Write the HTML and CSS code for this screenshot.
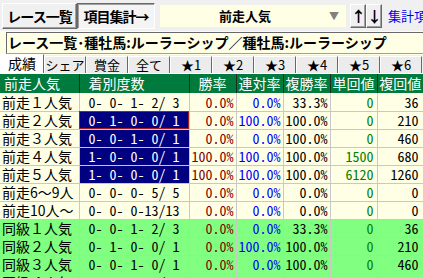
FILE: index.html
```html
<!DOCTYPE html>
<html lang="ja">
  <head>
    <meta charset="utf-8">
    <title>項目集計</title>
    <link rel="stylesheet" href="styles.css">
  </head>
<body>
	<div class="toolbar">
		<button class="btn btn-main">レース一覧</button>
		<button class="btn btn-main btn-down">項目集計→</button>
		<div class="combo">
			<span class="combo-text">前走人気</span>
			<span class="combo-arrow">▼</span>
		</div>
		<button class="btn btn-arrow">↑</button>
		<button class="btn btn-arrow">↓</button>
		<span class="link">集計項目</span>
	</div>

	<div class="title-row">
		<div class="title-box">レース一覧･種牡馬:ルーラーシップ／種牡馬:ルーラーシップ</div>
	</div>

	<div class="tabs">
		<span class="tab tab-on">成績</span>
		<span class="tab">シェア</span>
		<span class="tab">賞金</span>
		<span class="tab">全て</span>
		<span class="tab">★1</span>
		<span class="tab">★2</span>
		<span class="tab">★3</span>
		<span class="tab">★4</span>
		<span class="tab">★5</span>
		<span class="tab">★6</span>
	</div>

	<table class="grid">
		<colgroup>
			<col class="c-name"><col class="c-count"><col class="c-num"><col class="c-num"><col class="c-num"><col class="c-num"><col class="c-last">
		</colgroup>
		<thead>
			<tr>
				<th class="h-name">前走人気</th>
				<th class="h-count">着別度数</th>
				<th>勝率</th>
				<th>連対率</th>
				<th>複勝率</th>
				<th>単回値</th>
				<th>複回値</th>
			</tr>
		</thead>
		<tbody id="rows"></tbody>
	</table>

<script>
	// 行データ: [名前, 着別度数, 勝率, 連対率, 複勝率, 単回値, 複回値, 強調]
	var data = [
		["前走１人気", "0- 0- 1- 2/ 3", "0.0%", "0.0%", "33.3%", "0", "36", ""],
		["前走２人気", "0- 1- 0- 0/ 1", "0.0%", "100.0%", "100.0%", "0", "210", "hit focus"],
		["前走３人気", "0- 0- 1- 0/ 1", "0.0%", "0.0%", "100.0%", "0", "460", "hit"],
		["前走４人気", "1- 0- 0- 0/ 1", "100.0%", "100.0%", "100.0%", "1500", "680", "hit"],
		["前走５人気", "1- 0- 0- 0/ 1", "100.0%", "100.0%", "100.0%", "6120", "1260", "hit"],
		["前走6～9人", "0- 0- 0- 5/ 5", "0.0%", "0.0%", "0.0%", "0", "0", ""],
		["前走10人～", "0- 0- 0-13/13", "0.0%", "0.0%", "0.0%", "0", "0", ""],
		["同級１人気", "0- 0- 1- 2/ 3", "0.0%", "0.0%", "33.3%", "0", "36", ""],
		["同級２人気", "0- 1- 0- 0/ 1", "0.0%", "100.0%", "100.0%", "0", "210", ""],
		["同級３人気", "0- 0- 1- 0/ 1", "0.0%", "0.0%", "100.0%", "0", "460", ""],
		["同級４人気", "1- 0- 0- 0/ 1", "100.0%", "100.0%", "100.0%", "1500", "680", ""]
	];
	var cls = ["name", "count", "win", "ren", "fuku", "tan", "fret"];
	var body = document.getElementById('rows');
	for (var i = 0; i < data.length; i++) {
		var tr = document.createElement('tr');
		if (/^同級/.test(data[i][0])) tr.className = 'row-green';
		for (var j = 0; j < 7; j++) {
			var td = document.createElement('td');
			td.className = cls[j];
			if (j == 1 && data[i][7]) td.className += ' ' + data[i][7];
			td.textContent = data[i][j];
			tr.appendChild(td);
		}
		body.appendChild(tr);
	}
</script>
</body>
</html>
```

FILE: styles.css
```css
* {
    padding: 0;
    margin: 0;
    box-sizing: border-box;
}
body {
    width: 423px;
    height: 278px;
    overflow: hidden;
    background: #f0f0f0;
    font-family: "Noto Sans CJK JP", sans-serif;
}

/* 上のツールバー */
.toolbar {
    display: flex;
    align-items: center;
    height: 31px;
    padding-left: 2px;
    white-space: nowrap;
    overflow: hidden;
}
.toolbar > * {
    flex-shrink: 0;
}
.btn {
    font-family: "Noto Sans CJK JP", sans-serif;
    background: #f0f0f0;
    color: #000;
    border: 1px solid;
    border-color: #fff #696969 #696969 #fff;
    box-shadow: inset -1px -1px 0 #a0a0a0;
}
.btn-main {
    height: 26px;
    font-size: 14px;
    font-weight: bold;
    line-height: 22px;
    letter-spacing: -1px;
}
.btn-main:first-child {
    width: 75px;
}
.btn-down {
    width: 78px;
    border-color: #696969 #fff #fff #696969;
    box-shadow: inset 1px 1px 0 #a0a0a0;
    background: #f4f4f4;
}
.combo {
    display: flex;
    align-items: center;
    width: 186px;
    height: 22px;
    margin-left: 5px;
    margin-right: 4px;
    background: #ffffe6;
}
.combo-text {
    flex: 1;
    text-align: center;
    font-size: 13px;
    font-weight: bold;
    padding-left: 4px;
}
.combo-arrow {
    width: 16px;
    margin-right: 4px;
    font-size: 10px;
    color: #808080;
    text-align: center;
}
.btn-arrow {
    width: 16px;
    height: 24px;
    font-size: 15px;
    font-weight: bold;
    line-height: 20px;
}
.link {
    margin-left: 6px;
    font-size: 13px;
    color: #0000ee;
}

/* タイトル */
.title-row {
    background: #ffffe6;
    padding: 1px 0 1px 6px;
    height: 24px;
}
.title-box {
    height: 22px;
    border: 1px solid;
    border-color: #696969 #fff #a0a0a0 #696969;
    border-right: none;
    padding-left: 1px;
    font-size: 14px;
    font-weight: bold;
    line-height: 19px;
    white-space: nowrap;
    overflow: hidden;
}

/* タブ */
.tabs {
    display: flex;
    align-items: flex-end;
    height: 19px;
    border-bottom: 1px solid #fff;
}
.tab {
    width: 42px;
    height: 17px;
    font-size: 13px;
    line-height: 15px;
    text-align: center;
    background: #ececec;
    border: 1px solid;
    border-bottom: none;
    border-color: #fff #696969 transparent #fff;
    white-space: nowrap;
    overflow: hidden;
}
.tab-on {
    width: 44px;
    height: 19px;
    background: #fff;
    font-size: 14px;
    line-height: 17px;
}

/* 集計表 */
.grid {
    width: 423px;
    table-layout: fixed;
    border-collapse: collapse;
    font-size: 14px;
}
.c-name { width: 79px; }
.c-count { width: 110px; }
.c-num { width: 47px; }
.c-last { width: 46px; }
.grid th {
    height: 19px;
    background: #007a3d;
    color: #fff;
    font-weight: normal;
    text-align: center;
    border-left: 1px solid #1e2e1e;
    white-space: nowrap;
    overflow: hidden;
    line-height: 17px;
}
.grid th:first-child {
    border-left: none;
}
.grid th.h-name {
    text-align: left;
    padding-left: 4px;
}
.grid th.h-count {
    text-align: left;
    padding-left: 9px;
}
.grid td {
    height: 18px;
    background: #ffffe6;
    border: 1px solid #c8c8c8;
    border-top: none;
    line-height: 16px;
    text-align: right;
    padding-right: 2px;
    white-space: pre;
    overflow: hidden;
    font-feature-settings: "hwid";
}
.grid td.name {
    text-align: left;
    padding-left: 2px;
    border-left: none;
    font-feature-settings: normal;
}
.grid td.count {
    text-align: left;
    padding-left: 9px;
}
.grid td.hit {
    background: #000080;
    color: #fff;
}
.grid td.focus {
    outline: 1px solid #a02020;
    outline-offset: -1px;
}
.grid td.win { color: #800000; }
.grid td.ren { color: #0000ff; }
.grid td.tan { color: #008000; padding-right: 3px; }
.grid td.fret { padding-right: 4px; }
.row-green td {
    background: #80ff80;
}
```
